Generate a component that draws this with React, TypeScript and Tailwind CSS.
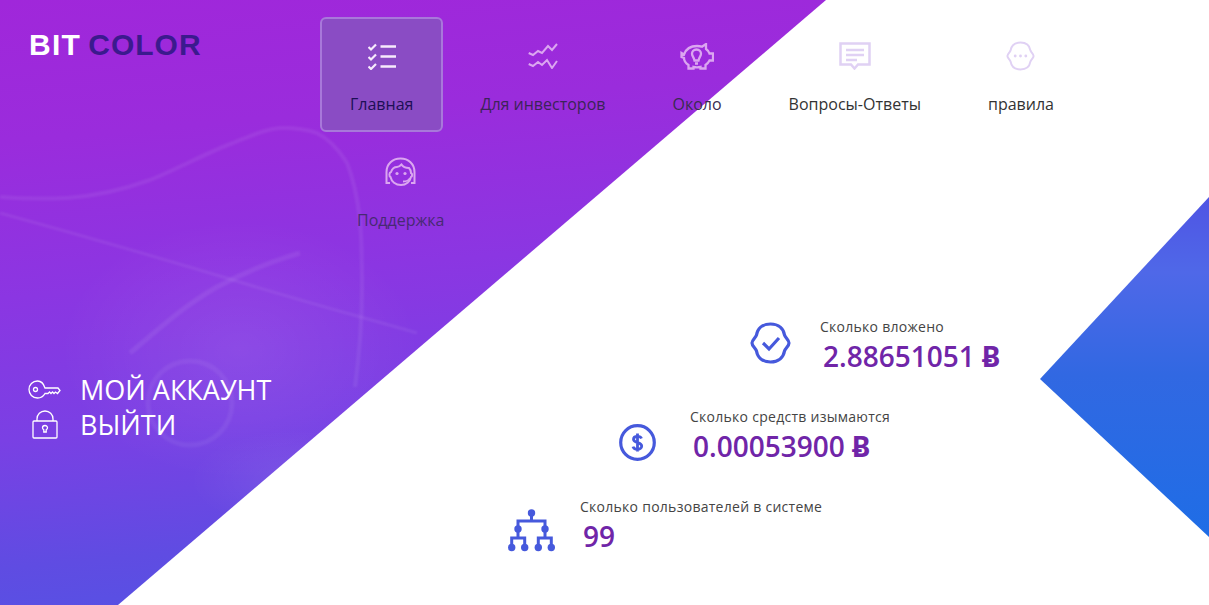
import React from 'react';

const TasksIcon = () => (
  <svg width="28" height="27" viewBox="0 0 28 27" fill="none" stroke="#f6eafc" strokeWidth="2.2">
    <path d="M0.500 4l2.500 2.500L8 1.500M0.500 14l2.500 2.500 5-5M0.500 23.500l2.500 2.500 5-5" />
    <path d="M12.500 3.500H28M12.500 13.500H28M12.500 23.500H28" strokeWidth="2.400" />
  </svg>
);

const WavesIcon = () => (
  <svg width="30" height="26" viewBox="0 0 30 26" fill="none" stroke="#dba6f0" strokeWidth="2">
    <path d="M0.700 10L5 12l5-4 4 2 6-7 4 4 5-6" />
    <path d="M0.700 21L5 23l5-4 4 3 5-5 5 8 5-7" />
  </svg>
);

const PiggyIcon = () => (
  <svg width="34" height="27" viewBox="0 0 34 27" fill="none" stroke="#dba6f0" strokeWidth="2.300">
    <path d="M1.500 10l2.500 1.500C6 6 11 3 17 3c2 0 3.500.2 5 .8L26 1v5c2 1.400 3 2.800 3.500 4.500H33v7h-3.500c-1 2-2.300 3.400-4 4.500v3.500h-5V24c-2 .4-5 .4-7 0v1.500h-5V22C5.500 20 4 17.500 4 15L1.500 14z" />
    <path d="M16.500 6.500c-2.800 0-4.500 2-4.500 4.300 0 2.400 2 3.500 2.500 6.700h4c.5-3.200 2.500-4.300 2.500-6.700 0-2.300-1.700-4.300-4.500-4.300zM15 20.500h3" />
  </svg>
);

const ChatIcon = () => (
  <svg width="32" height="28" viewBox="0 0 32 28" fill="none" stroke="#e0d1f4" strokeWidth="2.500">
    <path d="M1.500 1.500h29v21H19l-3.500 4-3.500-4H1.500z" />
    <path d="M7 8h18M7 13h18M7 18h11" />
  </svg>
);

const FaceIcon = ({ color, width = 2, inner }: { color: string; width?: number; inner: React.ReactNode }) => (
  <svg viewBox="0 0 41 42" className="w-full h-full" fill="none" stroke={color} strokeWidth={width}>
    <path d="M20.500 2C12 2 7.500 7 6.500 13 5.500 16 2 18 2 21s3.500 5 4.500 8c1 6 5.500 11 14 11s13-5 14-11c1-3 4.500-5 4.500-8s-3.500-5-4.500-8c-1-6-5.500-11-14-11z" />
    {inner}
  </svg>
);

const SupportIcon = () => (
  <svg width="31" height="30" viewBox="0 0 31 30" fill="none" stroke="#dba6f0" strokeWidth="2">
    <path d="M5 26H1.500V15C1.500 7 7.500 1.500 15.500 1.500S29.500 7 29.500 15v11H26" />
    <path d="M6 15c1-3 3-5 6-5 2 0 3-1 4.500-2.500C18 10 21 11 24 11c1.500 1.500 2 3 2 5 1.500.5 1.500 3.500 0 4-1 4.500-5 8-10 8-5.500 0-9.500-3.500-10.500-8-1.500-.5-1.500-4.500.5-5z" />
    <circle cx="12" cy="16.500" r="1.600" fill="#dba6f0" stroke="none" />
    <circle cx="20" cy="16.500" r="1.600" fill="#dba6f0" stroke="none" />
    <path d="M25 21c-1 2.500-4 3.500-7 3.500" />
  </svg>
);

const KeyIcon = () => (
  <svg width="34" height="19" viewBox="0 0 34 19" fill="none" stroke="#ffffff" strokeWidth="1.300">
    <path d="M9.500 1C4.500 1 1 5 1 9.500S4.500 18 9.500 18c3.500 0 6-1.800 7.500-4.500h3l1.500-1.500 1.500 1.500 1.500-1.500 1.500 1.500 1.500-1.500 2 1.500 2.500-3-2-2.500H17C15.500 3 13 1 9.500 1z" />
    <circle cx="7.500" cy="9.500" r="2" />
  </svg>
);

const LockIcon = () => (
  <svg width="26" height="29" viewBox="0 0 26 29" fill="none" stroke="#ffffff" strokeWidth="1.300">
    <rect x="1" y="11" width="24" height="17" rx="1" />
    <path d="M5 11V9c0-4.500 3.500-8 8-8s8 3.500 8 8v2" />
    <path d="M13 15.500c-1.500 0-2.500 1-2.500 2.300 0 1 .7 1.500 1.300 2v2.200h2.400v-2.200c.6-.5 1.300-1 1.300-2 0-1.300-1-2.300-2.500-2.300z" />
  </svg>
);

const DollarIcon = () => (
  <svg width="37" height="37" viewBox="0 0 37 37" fill="none" stroke="#4659dc" strokeWidth="3.200">
    <circle cx="18.500" cy="18.500" r="16.800" />
    <path d="M22.500 14.500c-.5-1.300-2-2.200-4-2.200-2.300 0-4 1.200-4 3 0 4.200 8.200 2.300 8.200 6.700 0 1.900-1.900 3.300-4.300 3.300-2.200 0-3.900-.9-4.400-2.600M18.500 9.500v18" strokeWidth="2.800" />
  </svg>
);

const TreeIcon = () => (
  <svg width="47" height="43" viewBox="0 0 47 43" fill="none" stroke="#4659dc" strokeWidth="3">
    <path d="M23.500 4v8M10 21v-9h27v9M10 21v8M37 21v8M3.700 38v-9h13v9M30.300 38v-9h13v9" />
    <g fill="#4659dc" stroke="none">
      <circle cx="23.500" cy="4" r="3.700" />
      <circle cx="10" cy="20" r="3.700" />
      <circle cx="37" cy="20" r="3.700" />
      <circle cx="3.700" cy="38.500" r="3.700" />
      <circle cx="16.700" cy="38.500" r="3.700" />
      <circle cx="30.300" cy="38.500" r="3.700" />
      <circle cx="43.300" cy="38.500" r="3.700" />
    </g>
  </svg>
);

const NavItem = ({ icon, label, active, color, className }: { icon: React.ReactNode; label: string; active?: boolean; color: string; className?: string }) => (
  <a
    className={`h-[115px] flex flex-col items-center px-[28px] rounded-md border-2 ${active ? 'bg-[#8a4cc4] border-[#a878da]' : 'border-transparent'} ${className || ''}`}
  >
    <div className="h-[32px] mt-[21px] flex items-center justify-center">{icon}</div>
    <span className={`mt-[21px] text-[16px] leading-[22px] whitespace-nowrap ${color}`}>{label}</span>
  </a>
);

const Stat = ({ icon, label, value, unit, className }: { icon: React.ReactNode; label: string; value: string; unit?: string; className: string }) => (
  <div className={`h-[90px] flex items-start ${className}`}>
    <div className="shrink-0 mt-[5px]">{icon}</div>
    <div>
      <p className="text-[14px] leading-[20px] tracking-[0.27px] text-[#444]">{label}</p>
      <p className="ml-[3px] text-[28px] leading-[38px] font-[550] text-[#7025a8] whitespace-nowrap">
        {value}
        {unit && <span className="ml-[7px] font-bold font-['Noto_Sans',sans-serif]">{unit}</span>}
      </p>
    </div>
  </div>
);

export default function App() {
  return (
    <div className="relative w-[1209px] h-[605px] overflow-hidden bg-white font-['Open_Sans',sans-serif]">
      {/* purple diagonal panel */}
      <div className="absolute inset-0 [clip-path:polygon(0_0,826px_0,118px_605px,0_605px)] bg-[linear-gradient(175deg,#a027da_0%,#9a2cdc_20%,#8b36e2_42%,#7a40e4_62%,#5f4ce2_80%,#4d57e6_100%)]">
        <svg width="1209" height="605" viewBox="0 0 1209 605" fill="none" className="block">
          <defs>
            <radialGradient id="glow" cx="50%" cy="50%" r="50%">
              <stop offset="0%" stopColor="#fff" stopOpacity="0.08" />
              <stop offset="100%" stopColor="#fff" stopOpacity="0" />
            </radialGradient>
          </defs>
          <ellipse cx="240" cy="350" rx="180" ry="130" fill="url(#glow)" />
          <ellipse cx="300" cy="480" rx="110" ry="50" fill="url(#glow)" />
          <g stroke="#fff" strokeOpacity="0.07" className="blur-[1px]">
            <path d="M0 197c25 2 45 2 67 1 30-2 55-8 83-18 30-12 58-28 83-37 20-8 35-15 50-15 14 0 25 2 34 5 12 6 22 17 30 30 8 20 11 40 13 57 2 25 2 45 2 67 0 30-3 70-7 100" strokeWidth="4" />
            <path d="M0 213c80 22 160 45 233 67 65 20 125 36 184 53" strokeWidth="3" />
            <path d="M130 353c30-25 55-48 87-66 28-15 55-26 83-34" strokeWidth="5" />
            <circle cx="190" cy="403" r="42" strokeWidth="5" strokeOpacity="0.06" />
          </g>
        </svg>
      </div>
      {/* blue triangle on the right */}
      <div className="absolute inset-0 [clip-path:polygon(1209px_197px,1040px_379px,1209px_537px)] bg-[linear-gradient(180deg,#4f55e4_33%,#4f68e8_45%,#3168e2_62%,#1f6de6_88%)]" />

      <div className="relative flex h-full">
        <div className="w-[320px] shrink-0 pl-[29px] flex flex-col">
          <div className="mt-[25px] h-[40px] leading-[40px] text-[30px] whitespace-nowrap font-['Liberation_Sans',sans-serif] font-bold">
            <span className="tracking-[1.3px] text-white">BIT</span>
            <span className="ml-[7px] tracking-[1px] text-[#3b1a8e]">COLOR</span>
          </div>
          <div className="mt-[307px] flex flex-col">
            <a className="h-[35px] flex items-center text-[27px] leading-[35px] text-white whitespace-nowrap">
              <span className="w-[51px] shrink-0 -ml-[1px] mr-[1px]"><KeyIcon /></span>
              МОЙ АККАУНТ
            </a>
            <a className="h-[35px] flex items-center text-[27px] leading-[35px] text-white whitespace-nowrap">
              <span className="w-[51px] shrink-0 pl-[3px]"><LockIcon /></span>
              ВЫЙТИ
            </a>
          </div>
        </div>

        <div className="flex-1">
          <nav className="pt-[17px] flex flex-wrap gap-x-[7px] gap-y-[1px]">
            <NavItem active icon={<TasksIcon />} label="Главная" color="text-[#1c0f55]" />
            <NavItem icon={<WavesIcon />} label="Для инвесторов" color="text-[#3c2358]" />
            <NavItem icon={<PiggyIcon />} label="Около" color="text-[#3a2a50]" />
            <NavItem icon={<ChatIcon />} label="Вопросы-Ответы" color="text-[#333]" />
            <NavItem icon={<div className="w-[29px] h-[30px]"><FaceIcon color="#e0d1f4" width={2.8} inner={<g fill="#e0d1f4" stroke="none"><circle cx="13" cy="21" r="2" /><circle cx="20.500" cy="21" r="2" /><circle cx="28" cy="21" r="2" /></g>} /></div>} label="правила" color="text-[#333]" />
            <NavItem icon={<SupportIcon />} label="Поддержка" color="text-[#472a72]" className="ml-[7px]" />
          </nav>

          <div className="mt-[69px]">
            <Stat
              className="ml-[430px]"
              icon={<div className="w-[41px] h-[42px] mr-[29px]"><FaceIcon color="#4659dc" width={3.2} inner={<path d="M13 21l6 6 10-11" strokeWidth="3.200" />} /></div>}
              label="Сколько вложено"
              value="2.88651051"
              unit="Ƀ"
            />
            <Stat
              className="ml-[299px]"
              icon={<div className="mr-[34px] mt-[12px]"><DollarIcon /></div>}
              label="Сколько средств изымаются"
              value="0.00053900"
              unit="Ƀ"
            />
            <Stat
              className="ml-[188px]"
              icon={<div className="mr-[25px] mt-[7px]"><TreeIcon /></div>}
              label="Сколько пользователей в системе"
              value="99"
            />
          </div>
        </div>
      </div>
    </div>
  );
}
